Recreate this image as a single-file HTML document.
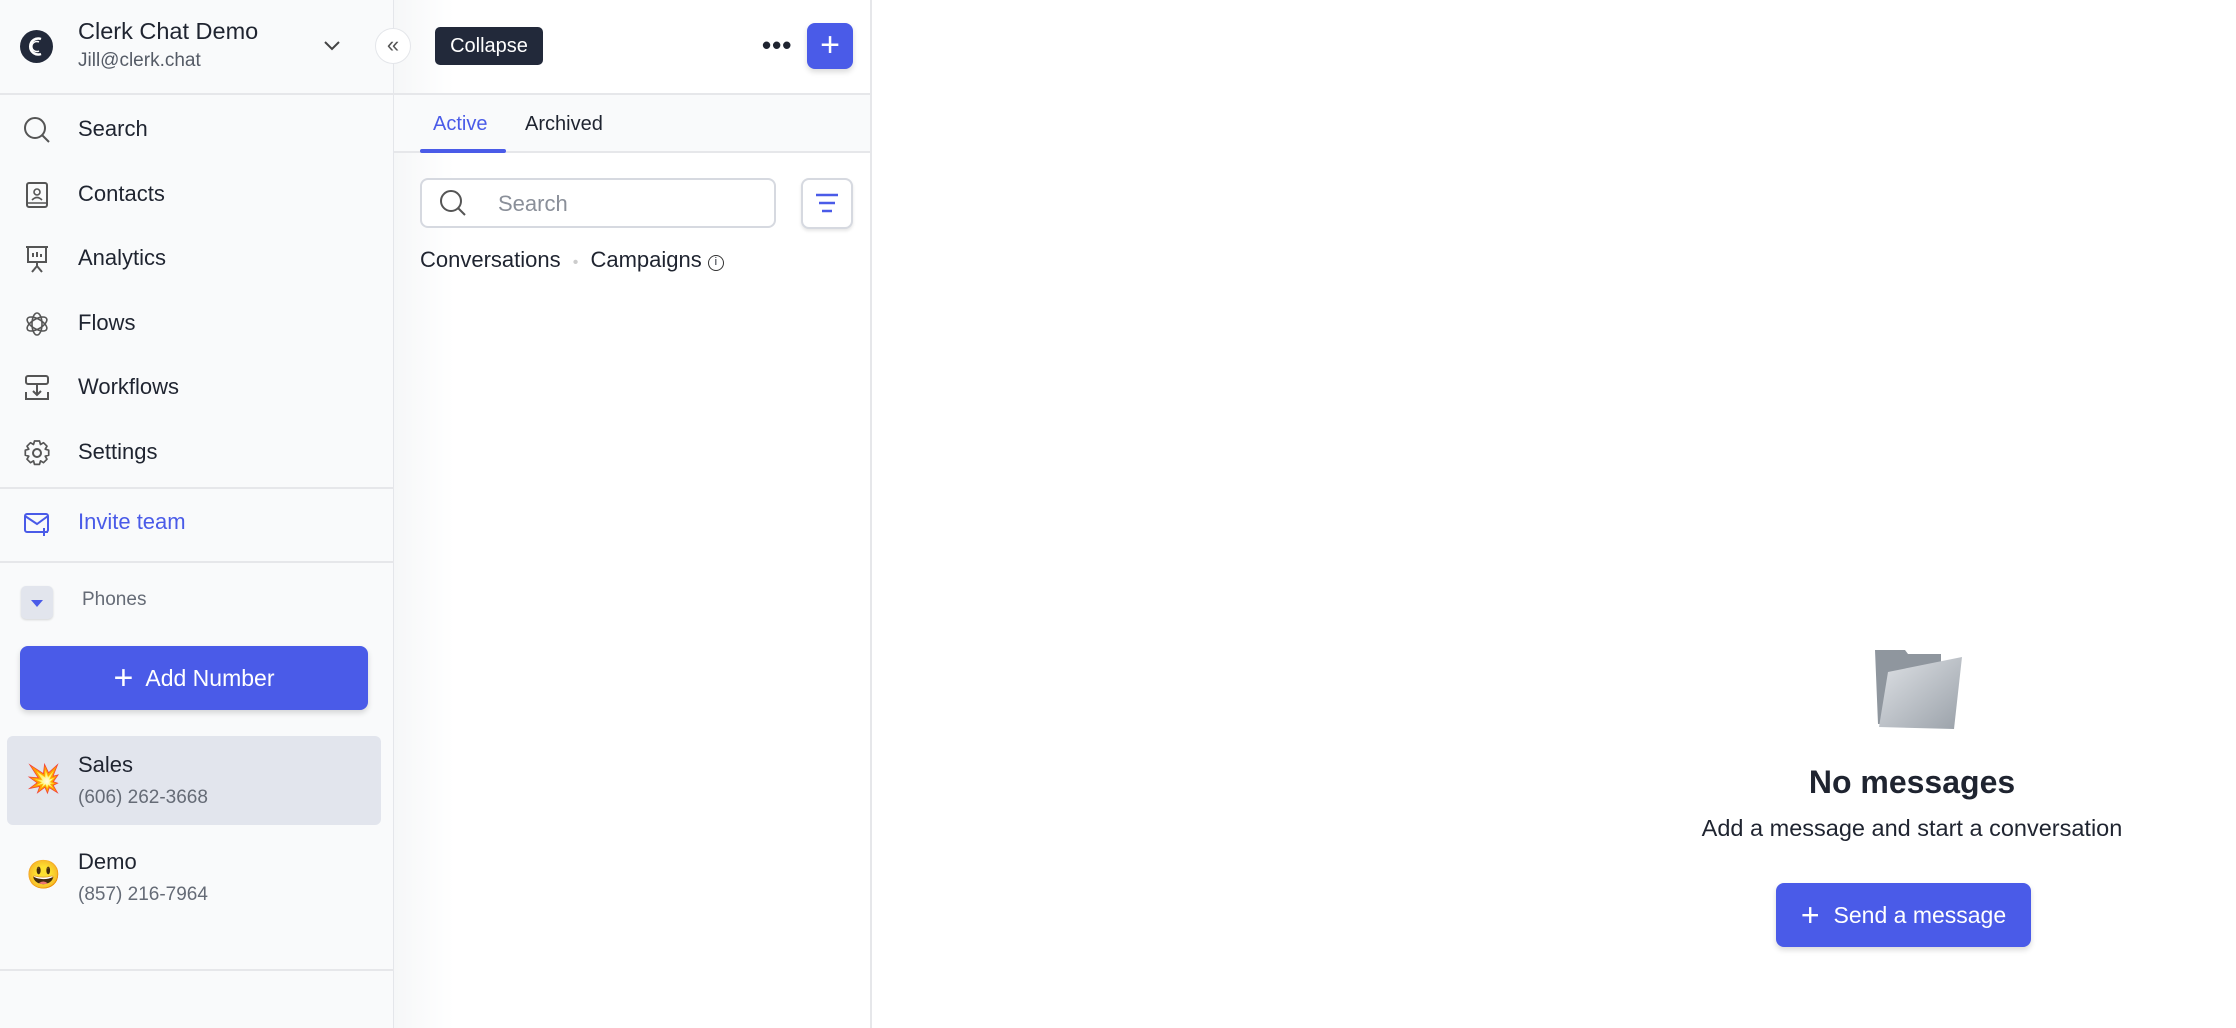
<!DOCTYPE html>
<html><head><meta charset="utf-8"><style>
*{box-sizing:border-box;margin:0;padding:0}
body{width:2236px;height:1028px;overflow:hidden;font-family:"Liberation Sans","Noto Sans CJK SC",sans-serif;color:#1f2430;background:#fff;position:relative}
.abs{position:absolute}
.side{left:0;top:0;width:394px;height:1028px;background:#f9fafb;border-right:1px solid #e4e6ea}
.hr{position:absolute;left:0;height:2px;background:#e6e7ea}
.nav{position:absolute;left:78px;font-size:22px;color:#1f2430}
.ic{position:absolute;left:22px;width:30px;height:30px}
.mid{left:394px;top:0;width:478px;height:1028px;background:linear-gradient(90deg,#f6f7f8 0,#fff 60px);border-right:2px solid #e6e7ea}
.btn{background:#4a5be8;color:#fff;border-radius:8px;box-shadow:0 3px 6px rgba(0,0,0,.15)}
</style></head><body>
<div class="abs side">
  <svg class="abs" style="left:20px;top:30px" width="33" height="33" viewBox="0 0 33 33"><circle cx="16.5" cy="16.5" r="16.5" fill="#22293a"/><path d="M21 9a8 8 0 1 0 0 15" fill="none" stroke="#fff" stroke-width="2.5"/><path d="M19 12a5 5 0 1 0 0 9" fill="none" stroke="#fff" stroke-width="1.5"/></svg>
  <div class="abs" style="left:78px;top:18px;font-size:23.5px;font-weight:500">Clerk Chat Demo</div>
  <div class="abs" style="left:78px;top:50px;font-size:19px;color:#555b66">Jill@clerk.chat</div>
  <svg class="abs" style="left:322px;top:38px" width="20" height="14" viewBox="0 0 20 14"><path d="M3 4l7 7 7-7" fill="none" stroke="#444" stroke-width="2"/></svg>
  <div class="hr" style="top:93px;width:394px"></div>
  <svg class="ic" style="top:115px" viewBox="0 0 30 30"><circle cx="13" cy="13" r="10" fill="none" stroke="#555" stroke-width="2"/><path d="M20 20l7 7" stroke="#555" stroke-width="2"/></svg>
  <div class="nav" style="top:116px">Search</div>
  <svg class="ic" style="top:180px" viewBox="0 0 30 30"><rect x="5" y="3" width="20" height="24" rx="2" fill="none" stroke="#555" stroke-width="2"/><circle cx="15" cy="12" r="3" fill="none" stroke="#555" stroke-width="1.6"/><path d="M10 20q5-5 10 0M5 23h20" stroke="#555" stroke-width="1.6" fill="none"/></svg>
  <div class="nav" style="top:181px">Contacts</div>
  <svg class="ic" style="top:244px" viewBox="0 0 30 30"><path d="M4 3h22M6 3v15h18V3M15 18v4M10 28l5-6 5 6M11 13v-4M15 13V8M19 13v-3" stroke="#555" stroke-width="2" fill="none"/></svg>
  <div class="nav" style="top:245px">Analytics</div>
  <svg class="ic" style="top:309px" viewBox="0 0 30 30" fill="none" stroke="#555" stroke-width="1.6"><ellipse cx="15" cy="15" rx="5" ry="11"/><ellipse cx="15" cy="15" rx="5" ry="11" transform="rotate(60 15 15)"/><ellipse cx="15" cy="15" rx="5" ry="11" transform="rotate(120 15 15)"/></svg>
  <div class="nav" style="top:310px">Flows</div>
  <svg class="ic" style="top:373px" viewBox="0 0 30 30"><rect x="4" y="3" width="22" height="8" rx="2" fill="none" stroke="#555" stroke-width="2"/><path d="M4 19v7h22v-7M15 11v11M11 18l4 4 4-4" fill="none" stroke="#555" stroke-width="2"/></svg>
  <div class="nav" style="top:374px">Workflows</div>
  <svg class="ic" style="top:438px" viewBox="0 0 30 30"><path d="M12.5 3h5l1 3.5 3-1.8 3.5 3.5-1.8 3 3.5 1v5l-3.5 1 1.8 3-3.5 3.5-3-1.8-1 3.5h-5l-1-3.5-3 1.8-3.5-3.5 1.8-3-3.5-1v-5l3.5-1-1.8-3 3.5-3.5 3 1.8z" fill="none" stroke="#555" stroke-width="1.7" stroke-linejoin="round"/><circle cx="15" cy="15" r="4" fill="none" stroke="#555" stroke-width="2"/></svg>
  <div class="nav" style="top:439px">Settings</div>
  <div class="hr" style="top:487px;width:394px"></div>
  <svg class="ic" style="top:508px" viewBox="0 0 30 30"><rect x="3" y="6" width="23" height="18" rx="2" fill="none" stroke="#4a5be8" stroke-width="2"/><path d="M3 8l12 8 11-8M22 20v8M18 24h8" fill="none" stroke="#4a5be8" stroke-width="2"/></svg>
  <div class="nav" style="top:509px;color:#4a5be8">Invite team</div>
  <div class="hr" style="top:561px;width:394px"></div>
  <div class="abs" style="left:21px;top:586px;width:32px;height:33px;border-radius:5px;background:#e2e5ed;box-shadow:0 1px 2px rgba(0,0,0,.15)"><svg width="32" height="33"><path d="M10 14h12l-6 7z" fill="#4a5be8"/></svg></div>
  <div class="abs" style="left:82px;top:589px;font-size:19px;color:#656b76">Phones</div>
  <div class="abs btn" style="left:20px;top:646px;width:348px;height:64px;font-size:23px;line-height:64px;text-align:center"><span style="font-size:34px;font-weight:300;vertical-align:-3px;margin-right:12px">+</span>Add Number</div>
  <div class="abs" style="left:7px;top:736px;width:374px;height:89px;background:#e2e5ed;border-radius:6px"></div>
  <div class="abs" style="left:26px;top:762px;font-size:28px">💥</div>
  <div class="abs" style="left:78px;top:752px;font-size:22px">Sales</div>
  <div class="abs" style="left:78px;top:787px;font-size:19px;color:#656b76">(606) 262-3668</div>
  <div class="abs" style="left:26px;top:858px;font-size:28px">😃</div>
  <div class="abs" style="left:78px;top:849px;font-size:22px">Demo</div>
  <div class="abs" style="left:78px;top:884px;font-size:19px;color:#656b76">(857) 216-7964</div>
  <div class="hr" style="top:969px;width:394px"></div>
</div>
<div class="abs mid">
  <div class="hr" style="top:93px;width:478px"></div>
  <div class="abs" style="left:0;top:95px;width:476px;height:58px;background:#f9fafb;border-bottom:2px solid #e6e7ea"></div>
  <div class="abs" style="left:39px;top:113px;font-size:20px;color:#4a5be8">Active</div>
  <div class="abs" style="left:26px;top:149px;width:86px;height:4px;background:#4a5be8;border-radius:2px"></div>
  <div class="abs" style="left:131px;top:113px;font-size:20px">Archived</div>
  <div class="abs" style="left:26px;top:178px;width:356px;height:50px;border:2px solid #d6d9e0;border-radius:8px;background:#fff"></div>
  <svg class="abs" style="left:44px;top:188px" width="30" height="30"><circle cx="13" cy="13" r="10" fill="none" stroke="#555" stroke-width="2"/><path d="M20 20l7 7" stroke="#555" stroke-width="2"/></svg>
  <div class="abs" style="left:104px;top:191px;font-size:22px;color:#8a8f99">Search</div>
  <div class="abs" style="left:407px;top:178px;width:52px;height:51px;border:2px solid #d6d9e0;border-radius:8px;background:#fff;box-shadow:0 2px 3px rgba(0,0,0,.1)"><svg width="48" height="47"><path d="M13 15h22M16 23h16M19 31h10" stroke="#4a5be8" stroke-width="2.4"/></svg></div>
  <div class="abs" style="left:26px;top:247px;font-size:22px">Conversations <span style="color:#ccc;font-size:16px;margin:0 6px">•</span> Campaigns <span style="display:inline-block;width:16px;height:16px;border:1.5px solid #333;border-radius:50%;text-align:center;line-height:13px;font-size:11px;vertical-align:2px">i</span></div>
  <div class="abs" style="left:41px;top:27px;width:108px;height:38px;background:#22293a;border-radius:5px;color:#fff;font-size:20px;line-height:38px;text-align:center">Collapse</div>
  <div class="abs" style="left:368px;top:30px;font-size:26px;font-weight:bold;letter-spacing:1px">•••</div>
  <div class="abs btn" style="left:413px;top:23px;width:46px;height:46px;font-size:34px;line-height:44px;text-align:center;font-weight:300">+</div>
</div>
<div class="abs" style="left:375px;top:28px;width:36px;height:36px;border-radius:50%;background:#fff;border:1px solid #e4e6ea;font-size:22px;line-height:32px;text-align:center;color:#555">«</div>
<svg class="abs" style="left:1870px;top:642px" width="94" height="90" viewBox="0 0 94 90"><defs><linearGradient id="g" x1="0" y1="0" x2="1" y2="1"><stop offset="0" stop-color="#dfe2e6"/><stop offset="1" stop-color="#9aa1a9"/></linearGradient></defs><path d="M5 8h30l3 4h33v70H8z" fill="#8f969e"/><path d="M18 30l74-15-8 72-75 -2z" fill="url(#g)"/></svg>
<div class="abs" style="left:1642px;top:764px;width:540px;text-align:center;font-size:32px;font-weight:bold">No messages</div>
<div class="abs" style="left:1622px;top:815px;width:580px;text-align:center;font-size:23.5px">Add a message and start a conversation</div>
<div class="abs btn" style="left:1776px;top:883px;width:255px;height:64px;font-size:23px;line-height:64px;text-align:center"><span style="font-size:32px;font-weight:300;vertical-align:-3px;margin-right:14px">+</span>Send a message</div>
</body></html>
